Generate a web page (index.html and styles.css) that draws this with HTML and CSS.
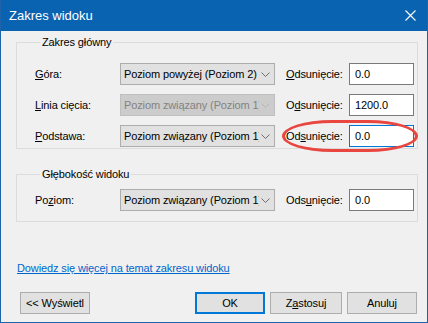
FILE: index.html
```html
<!DOCTYPE html>
<html lang="pl">
<head>
  <meta charset="UTF-8">
  <title>Zakres widoku</title>
  <link rel="stylesheet" href="styles.css">
</head>
<body>
  <div class="dialog">
    <div class="titlebar">
      <span class="title">Zakres widoku</span>
      <svg class="close" width="11" height="11" viewBox="0 0 11 11">
        <path d="M0.5 0.5 L10.5 10.5 M10.5 0.5 L0.5 10.5" stroke="#fff" stroke-width="1.1" fill="none"/>
      </svg>
    </div>

    <div class="content">
      <fieldset class="group main">
        <legend>Zakres główny</legend>
        <div class="rows">
          <label class="lbl"><u>G</u>óra:</label>
          <div class="select">
            <span>Poziom powyżej (Poziom 2)</span>
            <svg class="chev" width="9" height="5" viewBox="0 0 9 5"><polyline points="0.5,0.5 4.5,4.5 8.5,0.5" fill="none" stroke="#6d6d6d"/></svg>
          </div>
          <label class="lbl off"><u>O</u>dsunięcie:</label>
          <div class="input">0.0</div>

          <label class="lbl"><u>L</u>inia cięcia:</label>
          <div class="select disabled">
            <span>Poziom związany (Poziom 1)</span>
            <svg class="chev" width="9" height="5" viewBox="0 0 9 5"><polyline points="0.5,0.5 4.5,4.5 8.5,0.5" fill="none" stroke="#b4b4b4"/></svg>
          </div>
          <label class="lbl off">O<u>d</u>sunięcie:</label>
          <div class="input">1200.0</div>

          <label class="lbl"><u>P</u>odstawa:</label>
          <div class="select">
            <span>Poziom związany (Poziom 1)</span>
            <svg class="chev" width="9" height="5" viewBox="0 0 9 5"><polyline points="0.5,0.5 4.5,4.5 8.5,0.5" fill="none" stroke="#6d6d6d"/></svg>
          </div>
          <label class="lbl off marked">Od<u>s</u>unięcie:<span class="mark"></span></label>
          <div class="input focus">0.0</div>
        </div>
      </fieldset>

      <fieldset class="group depth">
        <legend>Głębokość widoku</legend>
        <div class="rows">
          <label class="lbl">Po<u>z</u>iom:</label>
          <div class="select">
            <span>Poziom związany (Poziom 1)</span>
            <svg class="chev" width="9" height="5" viewBox="0 0 9 5"><polyline points="0.5,0.5 4.5,4.5 8.5,0.5" fill="none" stroke="#6d6d6d"/></svg>
          </div>
          <label class="lbl off">Ods<u>u</u>nięcie:</label>
          <div class="input">0.0</div>
        </div>
      </fieldset>

      <a class="help" href="#">Dowiedz się więcej na temat zakresu widoku</a>

      <div class="buttons">
        <button class="btn">&lt;&lt; Wyświetl</button>
        <div class="right">
          <button class="btn default">OK</button>
          <button class="btn wide">Z<u>a</u>stosuj</button>
          <button class="btn">Anuluj</button>
        </div>
      </div>
    </div>
  </div>
</body>
</html>
```

FILE: styles.css
```css
body {
  margin: 0;
  font-family: 'Liberation Sans', Arial, sans-serif;
  font-size: 11px;
  letter-spacing: -0.12px;
  color: #000;
}

.dialog {
  width: 428px;
  height: 323px;
  box-sizing: border-box;
  border: 1px solid #1f64ab;
  border-top: none;
  background: #f0f0f0;
  position: relative;
}

.titlebar {
  height: 31px;
  background: #0a63b0;
  display: flex;
  align-items: center;
  justify-content: space-between;
  padding: 0 10px 0 8px;
  color: #fff;
}

.title {
  font-size: 13px;
  letter-spacing: 0;
  padding-bottom: 1px;
}

.close {
  margin-right: 1px;
}

.content {
  padding: 4px 9px 0 15px;
}

.group {
  margin: 0;
  border: 1px solid #dcdcdc;
  padding: 13px 3px 1px 18px;
}

.group legend {
  padding: 0 2px;
  margin-left: 5px;
  line-height: 15px;
  font-size: 11px;
}

.group.depth {
  margin-top: 18px;
  padding-top: 7px;
  padding-bottom: 10px;
}

.rows {
  display: grid;
  grid-template-columns: 85px 155px 74px 65px;
  grid-auto-rows: 22px;
  row-gap: 9px;
  align-items: center;
}

.lbl {
  white-space: nowrap;
}

.lbl.off {
  padding-left: 11px;
}

.marked {
  position: relative;
}

.mark {
  position: absolute;
  left: 7px;
  top: -10px;
  width: 130px;
  height: 26px;
  border: 3px solid #e8463f;
  border-radius: 50px / 16px;
}

.select {
  height: 22px;
  box-sizing: border-box;
  border: 1px solid #adadad;
  background: #e1e1e1;
  display: flex;
  align-items: center;
  padding: 0 3px 0 3px;
  white-space: nowrap;
}

.select span {
  flex: 1;
  overflow: hidden;
}

.select .chev {
  flex: none;
  margin-left: 2px;
  margin-right: 1px;
}

.select.disabled {
  background: #cccccc;
  border-color: #bfbfbf;
  color: #838383;
}

.input {
  height: 22px;
  box-sizing: border-box;
  border: 1px solid #7a7a7a;
  background: #fff;
  padding: 0 5px;
  display: flex;
  align-items: center;
}

.input.focus {
  border-color: #0078d7;
}

.help {
  display: block;
  margin-top: 39px;
  margin-left: 1px;
  line-height: 14px;
  color: #0066cc;
  text-decoration: underline;
}

.buttons {
  display: flex;
  justify-content: space-between;
  margin-top: 17px;
  padding-left: 4px;
  padding-right: 1px;
}

.right {
  display: flex;
  gap: 5px;
}

.btn {
  width: 70px;
  height: 22px;
  border: 1px solid #adadad;
  background: #e1e1e1;
  font-family: 'Liberation Sans', Arial, sans-serif;
  font-size: 11px;
  letter-spacing: -0.12px;
  color: #000;
  padding: 0;
}

.btn.wide {
  width: 72px;
}

.btn.default {
  border: 2px solid #0078d7;
}
```
